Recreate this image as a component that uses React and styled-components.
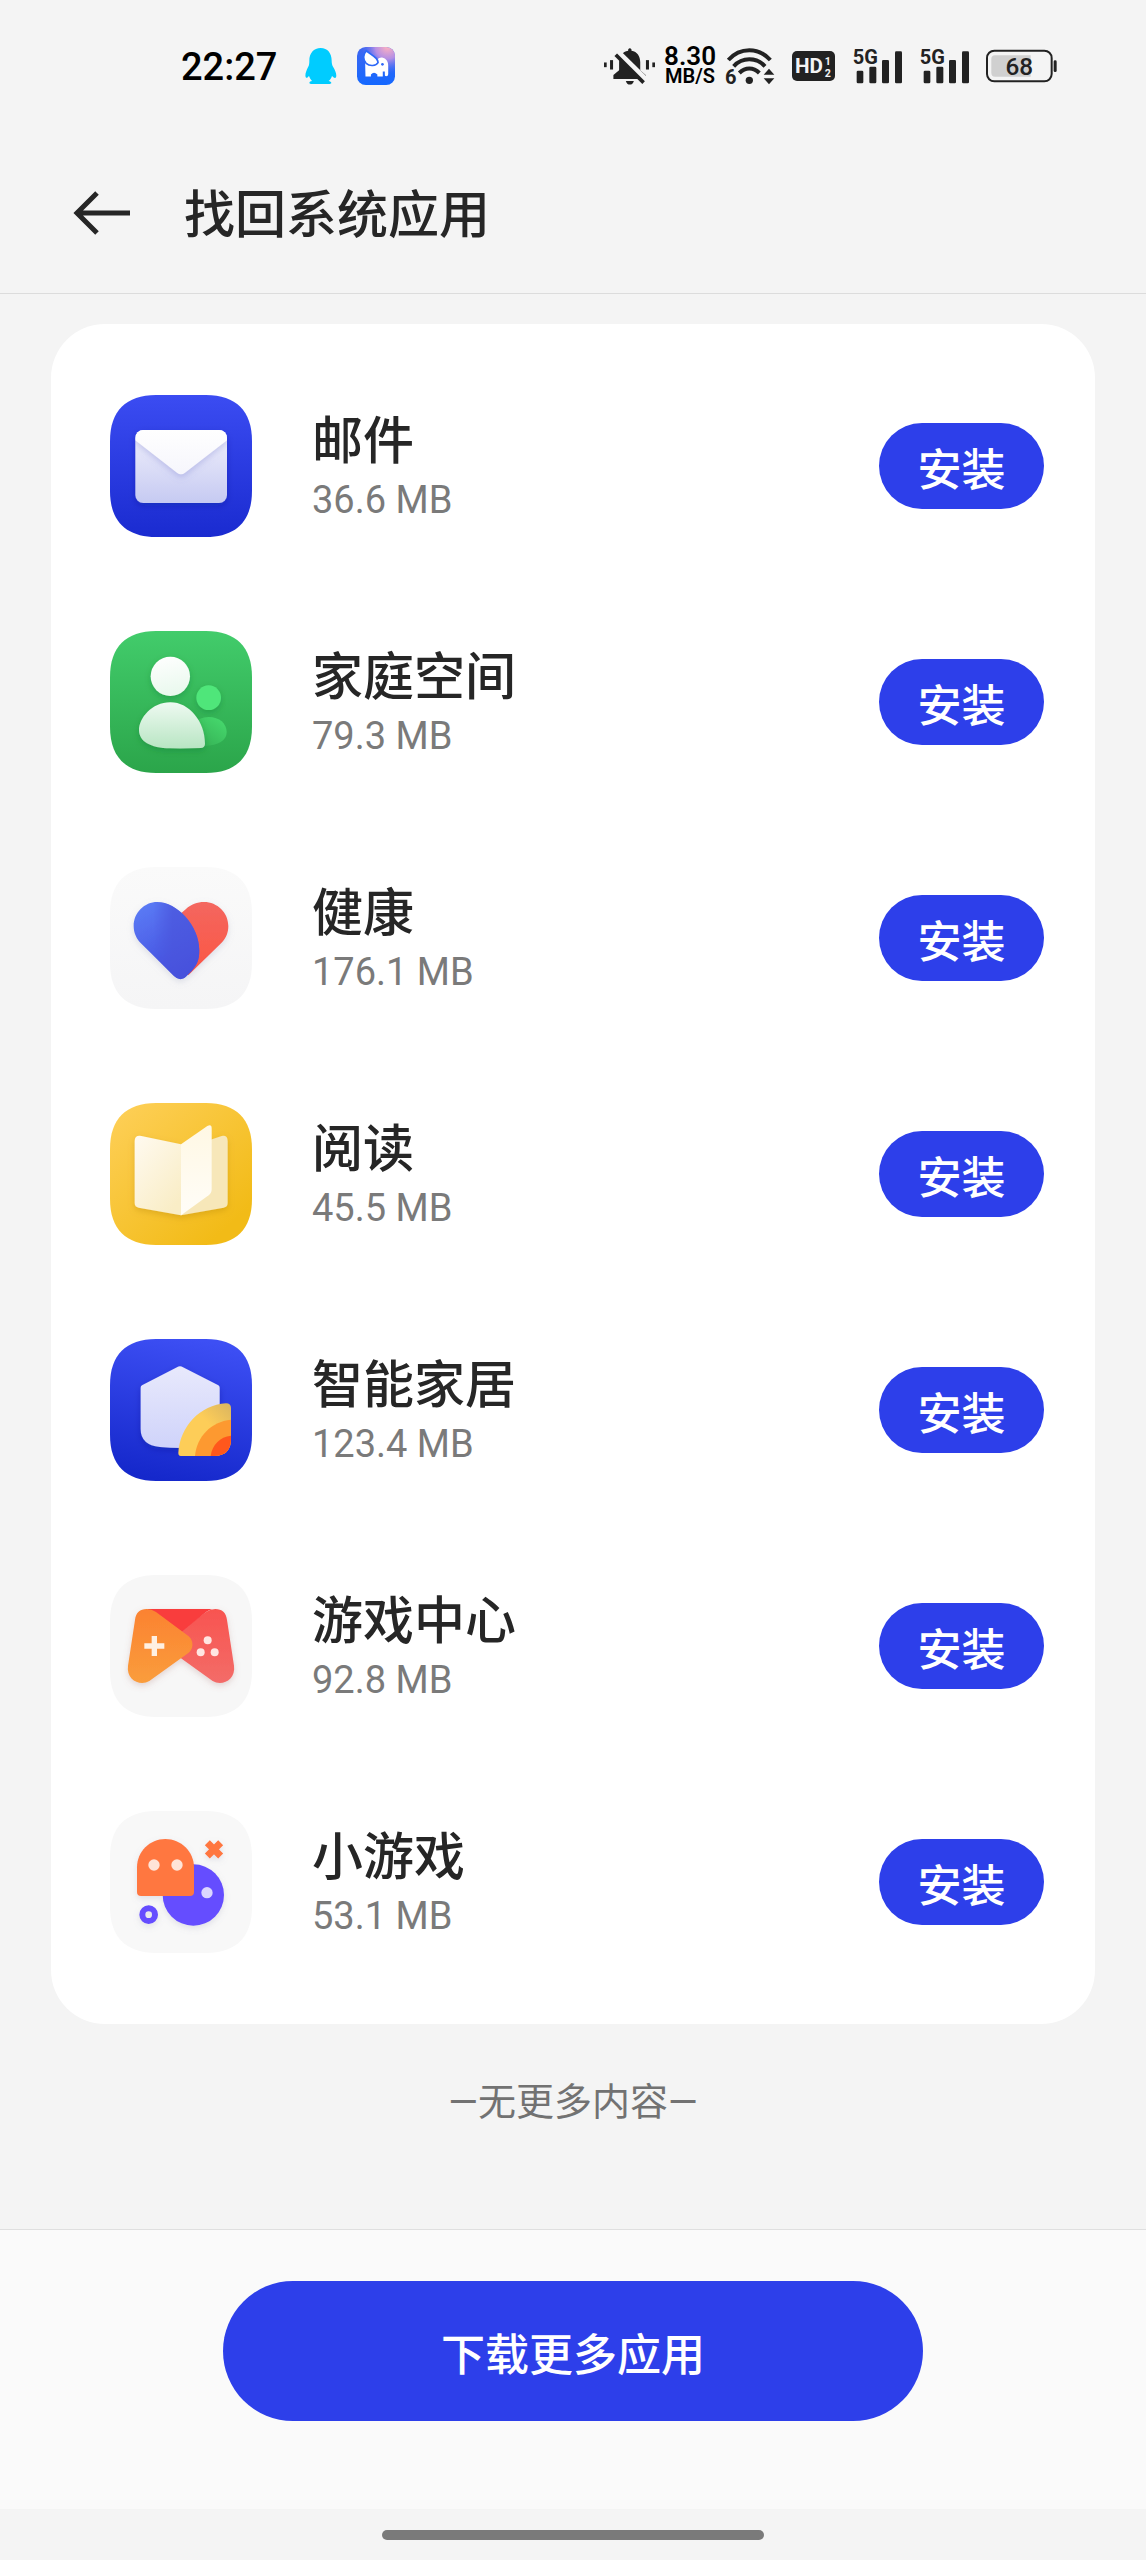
import React from "react";
import styled, { createGlobalStyle } from "styled-components";

const GlobalStyle = createGlobalStyle`
  * {
    box-sizing: border-box;
  }
  body {
    margin: 0;
    background: #f4f4f4;
    color: #262626;
    font-family: Roboto, "Noto Sans CJK SC", sans-serif;
  }
`;

const PageWrapper = styled('div')`
  display: flex;
  flex-direction: column;
  min-height: 100vh;
`;

const StatusBar = styled('div')`
  display: flex;
  justify-content: space-between;
  align-items: center;
  height: 132px;
  padding: 0 89px 0 181px;
`;

const StatusGroup = styled('div')`
  display: flex;
  align-items: center;
  gap: ${props => props.$gap}px;
`;

const Clock = styled('span')`
  color: #000;
  font-size: 38px;
  font-weight: 500;
  line-height: 44px;
  padding-top: 2px;
  margin-right: 8px;
`;

const NetSpeed = styled('div')`
  display: flex;
  flex-direction: column;
  align-items: center;
  color: #000;
  font-weight: 600;
`;

const SpeedValue = styled('span')`
  font-size: 26px;
  line-height: 20px;
`;

const SpeedUnit = styled('span')`
  font-size: 20px;
  line-height: 20px;
`;

const Header = styled('header')`
  display: flex;
  align-items: center;
  gap: 52px;
  height: 162px;
  padding: 0 72px;
  border-bottom: 1px solid #dcdcdc;
`;

const BackButton = styled('button')`
  display: flex;
  padding: 0;
  border: none;
  background: none;
  cursor: pointer;
`;

const Title = styled('h1')`
  margin: 0;
  padding-top: 6px;
  font-size: 51px;
  font-weight: 500;
  line-height: 72px;
`;

const Content = styled('main')`
  flex: 1;
  padding: 30px 51px;
`;

const AppList = styled('ul')`
  display: flex;
  flex-direction: column;
  gap: 94px;
  margin: 0;
  padding: 71px 51px 71px 59px;
  list-style: none;
  background: #fff;
  border-radius: 54px;
`;

const AppRow = styled('li')`
  display: flex;
  align-items: center;
  gap: 60px;
`;

const AppInfo = styled('div')`
  flex: 1;
  display: flex;
  flex-direction: column;
  padding-top: 4px;
`;

const AppName = styled('span')`
  font-size: 51px;
  font-weight: 500;
  line-height: 64px;
`;

const AppSize = styled('span')`
  color: #7a7a7a;
  font-size: 38px;
  line-height: 52px;
`;

const PillButton = styled('button')`
  border: none;
  background: #2d3fea;
  color: #fff;
  font-family: inherit;
  font-size: 44px;
  font-weight: 500;
  cursor: pointer;
`;

const InstallButton = styled(PillButton)`
  width: 165px;
  height: 86px;
  padding: 2px 0 0;
  border-radius: 43px;
`;

const DownloadButton = styled(PillButton)`
  width: 100%;
  max-width: 700px;
  height: 140px;
  padding: 2px 0 0;
  border-radius: 70px;
`;

const EndNote = styled('p')`
  margin: 50px 0 0;
  color: #727272;
  font-size: 38px;
  line-height: 56px;
  text-align: center;
`;

const BottomBar = styled('footer')`
  display: flex;
  justify-content: center;
  padding: 51px 48px 88px;
  background: #fafafa;
  border-top: 1px solid #dfdfdf;
`;

const NavBar = styled('div')`
  display: flex;
  justify-content: center;
  align-items: center;
  height: 51px;
`;

const NavHandle = styled('div')`
  width: 382px;
  height: 10px;
  border-radius: 5px;
  background: #7a7a7a;
`;

const AppIconSvg = styled('svg')`
  width: 142px;
  height: 142px;
  flex-shrink: 0;
`;

const TILE = "M138 0H288C378 0 426 48 426 138V288C426 378 378 426 288 426H138C48 426 0 378 0 288V138C0 48 48 0 138 0Z";

// vertical gradient unless x2/y2 are given
const Gradient = ({ id, from, to, x1 = 0, y1 = 0, x2 = 0, y2 = 1 }) => (
    <linearGradient id={id} x1={x1} y1={y1} x2={x2} y2={y2}>
        <stop offset="0" stopColor={from} />
        <stop offset="1" stopColor={to} />
    </linearGradient>
)

const Shadow = ({ id, color, opacity = 0.3 }) => (
    <filter id={id} x="-20%" y="-20%" width="140%" height="150%">
        <feDropShadow dx="0" dy="8" stdDeviation="9" floodColor={color} floodOpacity={opacity} />
    </filter>
)

const MailIcon = () => (
    <AppIconSvg viewBox="0 0 426 426" aria-hidden="true">
        <defs>
            <Gradient id="mailBg" from="#3b4cf2" to="#1a2bd0" />
            <Gradient id="mailBody" from="#f1f1fc" to="#c6caf2" />
            <Gradient id="mailFlap" from="#ffffff" to="#f6f6fc" />
            <Shadow id="mailShadow" color="#0a1480" />
            <Shadow id="flapShadow" color="#6a6fc8" />
            <clipPath id="mailClip"><rect x="76" y="105" width="275" height="219" rx="24" /></clipPath>
        </defs>
        <path d={TILE} fill="url(#mailBg)" />
        <rect x="76" y="105" width="275" height="219" rx="24" fill="url(#mailBody)" filter="url(#mailShadow)" />
        <g clipPath="url(#mailClip)">
            <path d="M76 95H351V136L225 233Q213 243 201 233L76 136Z" fill="url(#mailFlap)" filter="url(#flapShadow)" />
        </g>
    </AppIconSvg>
)

const FamilyIcon = () => (
    <AppIconSvg viewBox="0 0 426 426" aria-hidden="true">
        <defs>
            <Gradient id="familyBg" from="#42cc6b" to="#2ba54a" />
            <Gradient id="familyHead" from="#ffffff" to="#eaf9ee" x2={0.2} />
            <Gradient id="familyBody" from="#eefaf1" to="#b8e5c3" />
            <Gradient id="familyKid" from="#33ad52" to="#46d86d" x1={0} y1={1} x2={0.8} y2={0} />
            <Shadow id="familyShadow" color="#0c6b2a" />
        </defs>
        <path d={TILE} fill="url(#familyBg)" />
        <circle cx="296" cy="200" r="37" fill="#50e67a" filter="url(#familyShadow)" />
        <path d="M296 258C328 258 350 278 350 303C350 330 325 342 284 345L250 280Q268 258 296 258Z" fill="url(#familyKid)" />
        <circle cx="181" cy="136" r="59" fill="url(#familyHead)" filter="url(#familyShadow)" />
        <path d="M181 214C238 214 285 272 285 338Q285 350 272 351Q225 353 181 352C120 352 87 330 87 298C87 262 125 214 181 214Z" fill="url(#familyBody)" filter="url(#familyShadow)" />
    </AppIconSvg>
)

const HealthIcon = () => (
    <AppIconSvg viewBox="0 0 426 426" aria-hidden="true">
        <defs>
            <Gradient id="healthBg" from="#fafafa" to="#f5f5f6" />
            <Gradient id="healthRed" from="#f4675f" to="#fb5543" />
            <Gradient id="healthBlue" from="#5b7bf5" to="#4048dc" x1={0.2} x2={0.7} />
            <Shadow id="healthShadow" color="#8a90b0" opacity={0.25} />
            <clipPath id="healthClip">
                <path d="M142 105C200 105 268 175 268 250C268 280 260 295 245 312L232 325Q212 347 192 327L92 228C78 214 71 196 71 177C71 137 103 105 142 105Z" />
            </clipPath>
            <linearGradient id="healthFade" x1="0" x2="1">
                <stop offset="0" stopColor="#4a55dc" stopOpacity="0" />
                <stop offset="0.4" stopColor="#4a55dc" stopOpacity="0.7" />
                <stop offset="1" stopColor="#4a55dc" stopOpacity="0.7" />
            </linearGradient>
        </defs>
        <path d={TILE} fill="url(#healthBg)" />
        <g filter="url(#healthShadow)">
            <path d="M282 105C322 105 355 137 355 177C355 197 348 214 334 228L235 325L200 200V150L228 126C243 112 262 105 282 105Z" fill="url(#healthRed)" />
            <path d="M142 105C200 105 268 175 268 250C268 280 260 295 245 312L232 325Q212 347 192 327L92 228C78 214 71 196 71 177C71 137 103 105 142 105Z" fill="url(#healthBlue)" />
        </g>
        <rect x="130" y="100" width="145" height="245" fill="url(#healthFade)" clipPath="url(#healthClip)" />
    </AppIconSvg>
)

const ReadIcon = () => (
    <AppIconSvg viewBox="0 0 426 426" aria-hidden="true">
        <defs>
            <Gradient id="readBg" from="#fed05a" to="#f2bb17" x2={0.8} y2={0.9} />
            <Gradient id="readLeft" from="#fffaf0" to="#f9edc6" x2={0.7} />
            <Gradient id="readFront" from="#fff8e4" to="#fffdf8" />
            <Shadow id="readShadow" color="#a87400" />
        </defs>
        <path d={TILE} fill="url(#readBg)" />
        <g filter="url(#readShadow)">
            <path d="M213 140L335 99Q353 96 353 115V300Q353 312 341 314L213 337Z" fill="#f7e7b9" />
            <path d="M74 115Q74 96 94 99L213 124V337L86 314Q74 312 74 300Z" fill="url(#readLeft)" />
        </g>
        <path d="M213 124L292 69Q305 62 305 76V258Q305 270 296 277L213 337Z" fill="url(#readFront)" />
    </AppIconSvg>
)

const HomeIcon = () => (
    <AppIconSvg viewBox="0 0 426 426" aria-hidden="true">
        <defs>
            <Gradient id="homeBg" from="#3d4ff4" to="#1528cb" x1={0.6} x2={0.4} />
            <Gradient id="homeBody" from="#e8e9fc" to="#cfd3fa" />
            <Gradient id="homeOuter" from="#d9b460" to="#fdcd58" x1={1} x2={0.6} y2={0.4} />
            <Shadow id="homeShadow" color="#0a1480" />
        </defs>
        <path d={TILE} fill="url(#homeBg)" />
        <path d="M201 85Q210 79 219 85L325 139Q329 141 329 146V327H215Q180 327 150 324Q92 318 92 270V146Q92 141 96 139Z" fill="url(#homeBody)" filter="url(#homeShadow)" />
        <path d="M205 342C210 262 270 198 348 193Q363 193 363 207V300Q363 350 312 351H214Q205 352 205 342Z" fill="url(#homeOuter)" />
        <path d="M255 351C260 293 303 248 363 242V300Q363 350 312 351Z" fill="#fd9930" />
        <path d="M302 351C306 318 330 293 363 290V300Q363 350 312 351Z" fill="#ff571c" />
    </AppIconSvg>
)

const GameIcon = () => (
    <AppIconSvg viewBox="0 0 426 426" aria-hidden="true">
        <defs>
            <Gradient id="gameLeft" from="#fb8231" to="#fa9d3c" />
            <Gradient id="gameRight" from="#f85450" to="#f36c68" />
            <Shadow id="gameShadow" color="#a06a60" opacity={0.25} />
        </defs>
        <path d={TILE} fill="#f7f7f7" />
        <g filter="url(#gameShadow)">
            <path d="M351 135C349 113 336 102 316 102Q301 102 288 111L190 184L213 250L308 318C336 335 378 314 372 272Z" fill="url(#gameRight)" />
            <path d="M110 102H306Q297 105 288 111L215 170Z" fill="#f93c3e" />
            <path d="M75 135C77 113 90 102 110 102Q125 102 138 111L236 184C251 197 251 222 236 233L118 318C90 335 48 314 54 272Z" fill="url(#gameLeft)" />
        </g>
        <path d="M125 183h16v22h22v16h-22v22h-16v-22h-22v-16h22z" fill="#fff0e2" />
        <circle cx="293" cy="196" r="12" fill="#ffe6e2" />
        <circle cx="272" cy="232" r="12" fill="#ffe6e2" />
        <circle cx="314" cy="232" r="12" fill="#ffe6e2" />
    </AppIconSvg>
)

const MiniGameIcon = () => (
    <AppIconSvg viewBox="0 0 426 426" aria-hidden="true">
        <defs>
            <Shadow id="miniShadow" color="#8080a0" opacity={0.2} />
        </defs>
        <path d={TILE} fill="#f8f8f8" />
        <g filter="url(#miniShadow)">
            <circle cx="250" cy="252" r="92" fill="#654dff" />
            <path d="M81 169C81 122 119 84 166 84S252 122 252 169V243Q252 255 240 255H93Q81 255 81 243Z" fill="#ff7740" />
            <path d="M292 95L332 135M332 95L292 135" stroke="#ff7740" strokeWidth="21" strokeLinejoin="round" />
            <circle cx="116" cy="311" r="19" fill="none" stroke="#654dff" strokeWidth="18" />
        </g>
        <circle cx="291" cy="245" r="17" fill="#dcd6ff" />
        <circle cx="132" cy="162" r="17" fill="#ffe4d8" />
        <circle cx="201" cy="162" r="17" fill="#ffe4d8" />
    </AppIconSvg>
)

const PenguinIcon = () => (
    <svg width="32" height="36" viewBox="0 0 94 108" aria-hidden="true">
        <path d="M46 0C67 0 79 16 79 38C79 44 80 52 84 58C90 68 95 80 92 88C89 94 83 86 80 84C78 90 75 95 70 99C74 100 78 102 78 105C78 108 70 108 62 108H28C20 108 12 108 12 105C12 101 16 100 20 99C16 95 13 90 11 84C8 87 3 93 1 87C-2 80 4 66 8 58C12 52 12 44 12 38C12 16 25 0 46 0Z" fill="#00ccff" />
    </svg>
)

const ElephantIcon = () => (
    <svg width="38" height="38" viewBox="0 0 112 112" aria-hidden="true">
        <defs>
            <Gradient id="elephantBg" from="#3f66f0" to="#1468ff" />
            <radialGradient id="elephantGlow" cx="0.8" cy="0" r="0.7">
                <stop offset="0" stopColor="#ffb3bf" />
                <stop offset="0.45" stopColor="#d59ae0" stopOpacity="0.8" />
                <stop offset="1" stopColor="#5a70f5" stopOpacity="0" />
            </radialGradient>
        </defs>
        <rect width="112" height="112" rx="26" fill="url(#elephantBg)" />
        <rect width="112" height="112" rx="26" fill="url(#elephantGlow)" />
        <path d="M24 46L60 36Q66 30 74 31C86 33 93 44 92 58V80Q92 86 86 86Q81 86 82 80V72H76V87H60V81Q50 71 41 81V87H25Z" fill="#fff" />
        <path d="M27 11C17 24 18 38 27 48C38 58 56 56 62 46C62 31 44 25 27 11Z" fill="#fff" stroke="#2d68f8" strokeWidth="5" />
        <circle cx="75" cy="51" r="4" fill="#2d68f8" />
    </svg>
)

const BellOffIcon = () => (
    <svg width="51" height="37" viewBox="0 0 152 110" fill="#222" aria-hidden="true">
        <path d="M72 4Q77 -3 82 4V8C99 11 108 24 108 42V66L125 81V92H28V80L45 66V42C45 24 55 11 72 8Z" />
        <path d="M65 98H89Q86 109 77 109T65 98Z" />
        <rect x="0" y="43" width="8" height="14" />
        <rect x="18" y="36" width="9" height="28" />
        <rect x="125" y="36" width="9" height="28" />
        <rect x="144" y="43" width="8" height="14" />
        <path d="M36 8L130 100" stroke="#f4f4f4" strokeWidth="18" />
        <path d="M35 20L118 103" stroke="#222" strokeWidth="11" />
    </svg>
)

const WifiIcon = () => (
    <svg width="50" height="46" viewBox="-3 -14 150 138" fill="#222" aria-hidden="true">
        <g fill="none" stroke="#222" strokeWidth="12">
            <path d="M7 37C42 -2 98 -2 133 37" />
            <path d="M23 56C49 28 91 28 117 56" />
            <path d="M40 76C58 58 82 58 100 76" />
        </g>
        <circle cx="70" cy="98" r="11" />
        <path d="M113 81L129 63L145 81ZM113 92H145L129 110Z" />
        <text x="-3" y="108" fontFamily="Roboto, sans-serif" fontSize="60" fontWeight="700">6</text>
    </svg>
)

const HdIcon = () => (
    <svg width="43" height="30" viewBox="0 0 129 90" aria-hidden="true">
        <rect width="129" height="90" rx="15" fill="#222" />
        <g fill="#f4f4f4" fontFamily="Roboto, sans-serif" fontWeight="700">
            <text x="9" y="67" fontSize="62">HD</text>
            <text x="98" y="41" fontSize="32">1</text>
            <text x="98" y="79" fontSize="32">2</text>
        </g>
    </svg>
)

const SignalIcon = () => (
    <svg width="50" height="44" viewBox="-3 -12 150 132" fill="#222" aria-hidden="true">
        <rect x="11" y="68" width="20" height="38" rx="4" />
        <rect x="49" y="56" width="21" height="50" rx="4" />
        <rect x="87" y="36" width="21" height="70" rx="4" />
        <rect x="126" y="10" width="21" height="96" rx="4" />
        <text x="-1" y="48" fontFamily="Roboto, sans-serif" fontSize="60" fontWeight="700" stroke="#f4f4f4" strokeWidth="6" paintOrder="stroke">5G</text>
    </svg>
)

const BatteryIcon = () => (
    <svg width="71" height="34" viewBox="0 0 213 102" aria-hidden="true">
        <rect x="3" y="5" width="194" height="92" rx="22" fill="none" stroke="#222" strokeWidth="6" />
        <path d="M27 19H134V83H27Q16 83 16 72V30Q16 19 27 19Z" fill="#d0d0d0" />
        <rect x="203" y="34" width="9" height="35" rx="4" fill="#222" />
        <text x="100" y="77" fill="#222" fontFamily="Roboto, sans-serif" fontSize="73" fontWeight="500" textAnchor="middle">68</text>
    </svg>
)

const BackIcon = () => (
    <svg width="60" height="44" viewBox="0 0 60 44" fill="none" stroke="#262626" strokeWidth="5" aria-hidden="true">
        <path d="M25 2L5 22L25 42M4 22H58" />
    </svg>
)

const apps = [
    { name: '邮件', size: '36.6 MB', Icon: MailIcon },
    { name: '家庭空间', size: '79.3 MB', Icon: FamilyIcon },
    { name: '健康', size: '176.1 MB', Icon: HealthIcon },
    { name: '阅读', size: '45.5 MB', Icon: ReadIcon },
    { name: '智能家居', size: '123.4 MB', Icon: HomeIcon },
    { name: '游戏中心', size: '92.8 MB', Icon: GameIcon },
    { name: '小游戏', size: '53.1 MB', Icon: MiniGameIcon },
]

const App = () => {

    return (
        <PageWrapper lang="zh-CN">
            <GlobalStyle />
            <StatusBar>
                <StatusGroup $gap={20}>
                    <Clock>22:27</Clock>
                    <PenguinIcon />
                    <ElephantIcon />
                </StatusGroup>
                <StatusGroup $gap={17}>
                    <StatusGroup $gap={9}>
                        <BellOffIcon />
                        <NetSpeed>
                            <SpeedValue>8.30</SpeedValue>
                            <SpeedUnit>MB/S</SpeedUnit>
                        </NetSpeed>
                        <WifiIcon />
                    </StatusGroup>
                    <HdIcon />
                    <SignalIcon />
                    <SignalIcon />
                    <BatteryIcon />
                </StatusGroup>
            </StatusBar>
            <Header>
                <BackButton aria-label="返回">
                    <BackIcon />
                </BackButton>
                <Title>找回系统应用</Title>
            </Header>
            <Content>
                <AppList>
                    {apps.map(({ name, size, Icon }) => (
                        <AppRow key={name}>
                            <Icon />
                            <AppInfo>
                                <AppName>{name}</AppName>
                                <AppSize>{size}</AppSize>
                            </AppInfo>
                            <InstallButton>安装</InstallButton>
                        </AppRow>
                    ))}
                </AppList>
                <EndNote>—无更多内容—</EndNote>
            </Content>
            <BottomBar>
                <DownloadButton>下载更多应用</DownloadButton>
            </BottomBar>
            <NavBar>
                <NavHandle />
            </NavBar>
        </PageWrapper>
    )
};

export default App;
